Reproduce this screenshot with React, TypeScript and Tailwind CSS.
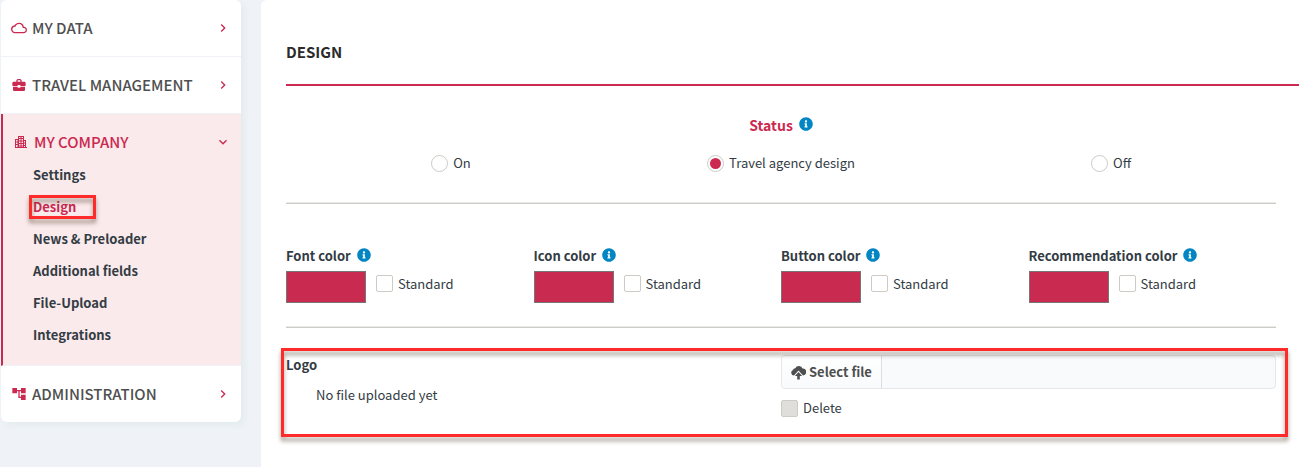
import { useState } from "react";
import type { ReactNode } from "react";
import { FaInfoCircle } from "react-icons/fa";
import { MdAccountTree, MdBusinessCenter, MdChevronRight, MdCloudQueue, MdExpandMore } from "react-icons/md";

const companyLinks = ["Settings", "Design", "News & Preloader", "Additional fields", "File-Upload", "Integrations"];

const statusOptions = ["On", "Travel agency design", "Off"];

const colorFields = [
  { id: "font-color", label: "Font color" },
  { id: "icon-color", label: "Icon color" },
  { id: "button-color", label: "Button color" },
  { id: "recommendation-color", label: "Recommendation color" },
];

function BuildingIcon() {
  return (
    <svg viewBox="0 0 12 12" className="h-3 w-3" fill="currentColor" aria-hidden="true">
      <path
        fillRule="evenodd"
        d="M3 0h6v4h2v7h1v1H0V3h3V0zM4 1v1h1.500V1H4zM6.500 1v1H8V1H6.500zM4 3v1.500h1.500V3H4zM6.500 3v1.500H8V3H6.500zM1 4v1.500h1.500V4H1zM1 6.500V8h1.500V6.500H1zM4 5.500V7h1.500V5.500H4zM6.500 5.500V7H8V5.500H6.500zM9 5v1.500h1V5H9zM9 7.500V9h1V7.500H9zM1 9v2h1.500V9H1zM4 8v1.500h1.500V8H4zM6.500 8v1.500H8V8H6.500zM4 10.500v.5h1.500v-.5H4zM6.500 10.500v.5H8v-.5H6.500zM9 10v1h1v-1H9z"
      />
    </svg>
  );
}

function CloudUploadIcon() {
  return (
    <svg viewBox="0 0 15 15" className="h-[15px] w-[15px]" fill="currentColor" aria-hidden="true">
      <path d="M3 10.500A2.800 2.800 0 0 1 2 5.100 2.300 2.300 0 0 1 4.300 3.200 4 4 0 0 1 11.600 3.600 3.400 3.400 0 0 1 12 10.400L7.500 5.500 3 10.500z" />
      <path d="M7.500 7l3.600 4H8.800v3.500H6.200V11H3.900L7.500 7z" />
    </svg>
  );
}

function InfoButton({ label }: { label: string }) {
  return (
    <button type="button" aria-label={`Info: ${label}`} className="pb-0.5 text-[#0185c3]">
      <FaInfoCircle className="h-[14px] w-[14px]" />
    </button>
  );
}

// red frame laid over the highlighted part
function Highlight({ className }: { className: string }) {
  return (
    <div
      className={`pointer-events-none absolute border-3 border-[#ff2a2a] drop-shadow-[0_4px_2px_rgba(70,50,30,0.5)] ${className}`}
    />
  );
}

type MenuButtonProps = { icon: ReactNode; label: string; open?: boolean };

function MenuButton({ icon, label, open = false }: MenuButtonProps) {
  return (
    <button
      type="button"
      aria-expanded={open}
      className={`flex h-14 w-full items-center gap-[5px] px-2.5 text-[15px] font-medium ${
        open ? "text-[#cb2950]" : "text-[#4f4f4f]"
      }`}
    >
      <span className="flex w-4 justify-center text-[#cb2950]">{icon}</span>
      <span className="grow text-left">{label}</span>
      <span className="text-[#cb2950]">
        {open ? <MdExpandMore className="h-4 w-4" /> : <MdChevronRight className="h-4 w-4" />}
      </span>
    </button>
  );
}

function Sidebar() {
  return (
    <nav className="ml-px w-60 shrink-0 self-start overflow-hidden rounded-md bg-white shadow-[4px_4px_6px_#e4ebee]">
      <div className="border-b border-[#eff2f6]">
        <MenuButton icon={<MdCloudQueue className="h-4 w-4" />} label="MY DATA" />
      </div>
      <div className="border-b border-[#eff2f6]">
        <MenuButton icon={<MdBusinessCenter className="h-4 w-4" />} label="TRAVEL MANAGEMENT" />
      </div>
      <div className="border-b border-l-2 border-b-[#eff2f6] border-l-[#cb2950] bg-[#faeaeb] pb-3.5">
        <MenuButton icon={<BuildingIcon />} label="MY COMPANY" open />
        <ul className="-mt-[11px] pl-[30px] text-[13px] font-bold text-[#333c44]">
          {companyLinks.map((name) => (
            <li key={name} className="flex h-8 items-center">
              {name === "Design" ? (
                <a href="#design" aria-current="page" className="relative text-[#cb2950]">
                  {name}
                  <Highlight className="-top-0.5 -right-5 -bottom-0.5 -left-1" />
                </a>
              ) : (
                <a href="#">{name}</a>
              )}
            </li>
          ))}
        </ul>
      </div>
      <MenuButton icon={<MdAccountTree className="h-4 w-4" />} label="ADMINISTRATION" />
    </nav>
  );
}

function ColorField({ id, label }: { id: string; label: string }) {
  const [color, setColor] = useState("#c92a50");

  return (
    <div>
      <div className="flex items-center gap-1.5">
        <label htmlFor={id} className="font-bold">
          {label}
        </label>
        <InfoButton label={label} />
      </div>
      <div className="mt-[5px] flex gap-2.5">
        <input
          id={id}
          type="color"
          value={color}
          onChange={(e) => setColor(e.target.value)}
          className="h-8 w-20 appearance-none border border-[#767676] [&::-webkit-color-swatch]:border-0 [&::-webkit-color-swatch-wrapper]:p-0"
        />
        <label className="flex h-6 items-center gap-[5px]">
          <input
            type="checkbox"
            className="h-[17px] w-[17px] appearance-none rounded-xs border border-[#cccbc6] bg-white checked:bg-[#cb2950]"
          />
          <span className="pt-0.5">Standard</span>
        </label>
      </div>
    </div>
  );
}

export default function App() {
  const [status, setStatus] = useState("Travel agency design");

  return (
    <div className="flex min-h-screen gap-5 bg-[#eff3f8] font-['Noto_Sans_CJK_SC',sans-serif] text-[13px] leading-5 text-[#333c44]">
      <Sidebar />
      <main className="min-w-0 grow rounded-tl-md bg-white pl-[25px]">
        <h1 className="border-b-2 border-[#cb2950] pt-[42px] pb-[22px] text-[15px] font-bold text-[#2b2b2b]">
          DESIGN
        </h1>

        <div className="pr-[23px]">
          <section
            role="radiogroup"
            aria-labelledby="status-label"
            className="border-b border-[#cdcbc7] pt-[29px] pb-[30px] shadow-[inset_0_-1px_#eceae6]"
          >
            <div className="flex items-center justify-center gap-1.5 text-sm font-bold text-[#cb2950]">
              <span id="status-label">Status</span>
              <InfoButton label="Status" />
            </div>
            <div className="mt-[18px] grid grid-cols-3">
              {statusOptions.map((option) => (
                <label key={option} className="flex items-center justify-center gap-[5px]">
                  <input
                    type="radio"
                    name="status"
                    value={option}
                    checked={status === option}
                    onChange={() => setStatus(option)}
                    className="h-[17px] w-[17px] appearance-none rounded-full border border-[#cccbc6] bg-white bg-clip-content p-0.5 checked:bg-[#cb2950]"
                  />
                  {option}
                </label>
              ))}
            </div>
          </section>

          <section className="grid grid-cols-4 border-b border-[#cdcbc7] pt-[42px] pb-6 shadow-[inset_0_-1px_#eceae6]">
            {colorFields.map((field) => (
              <ColorField key={field.id} id={field.id} label={field.label} />
            ))}
          </section>

          <section className="relative mt-5 grid grid-cols-2 pt-[7px] pb-[19px]">
            <div>
              <label htmlFor="logo-file" className="font-bold">
                Logo
              </label>
              <p className="mt-2.5 pl-[30px]">No file uploaded yet</p>
            </div>
            <div>
              <div className="flex h-[34px] overflow-hidden rounded-sm border border-[#e4e7eb] bg-[#f8fafc]">
                <button
                  type="button"
                  className="flex shrink-0 items-center gap-[3px] border-r border-[#d9dee4] bg-linear-to-b from-white to-[#f8fafc] px-[9px] font-bold text-[#4f4f4f]"
                >
                  <CloudUploadIcon />
                  Select file
                </button>
                <input id="logo-file" type="text" readOnly className="min-w-0 grow bg-transparent px-2" />
              </div>
              <label className="mt-[9px] flex items-center gap-[5px]">
                <input
                  type="checkbox"
                  disabled
                  className="h-[17px] w-[17px] appearance-none rounded-xs border border-[#cccbc6] bg-[#dfdeda]"
                />
                Delete
              </label>
            </div>
            <Highlight className="top-0 -right-3 bottom-0 -left-[5px]" />
          </section>
        </div>
      </main>
    </div>
  );
}
